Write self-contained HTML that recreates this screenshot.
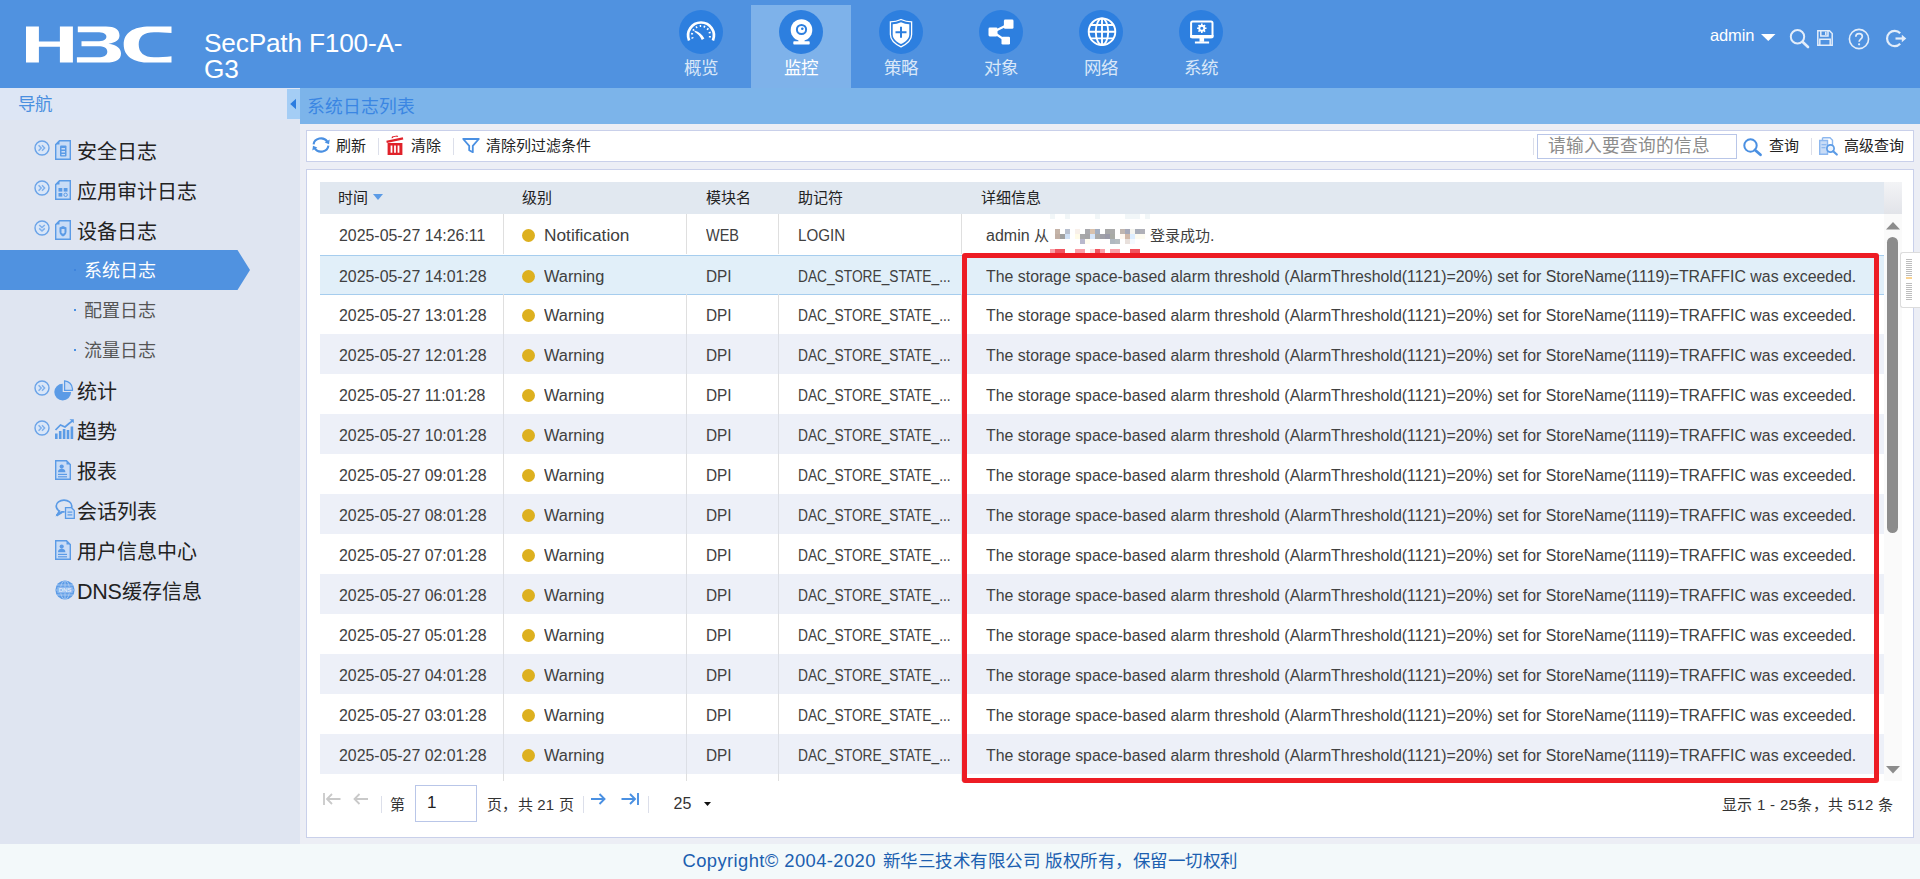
<!DOCTYPE html>
<html lang="zh-CN">
<head>
<meta charset="utf-8">
<title>H3C SecPath F100-A-G3</title>
<style>
*{box-sizing:border-box;margin:0;padding:0}
html,body{width:1920px;height:879px;overflow:hidden;background:#eceef5;font-family:"Liberation Sans",sans-serif;color:#333}
.abs{position:absolute}
svg{display:block;overflow:visible}
/* ---------- header ---------- */
#hdr{position:absolute;left:0;top:0;width:1920px;height:88px;background:#5092e0}
#logo{position:absolute;left:26px;top:25.700px}
#prod{position:absolute;left:204px;top:29.500px;width:210px;font-size:26.250px;line-height:26.500px;color:#fff;letter-spacing:-.2px}
.tab{position:absolute;top:5px;width:100px;height:83px}
.tab.on{background:#7eb2ea}
.tab .ic{position:absolute;left:27.500px;top:5px;width:44px;height:44px;border-radius:50%;background:#2d7fdf}
.tab .lb{position:absolute;left:0;top:51px;width:100px;text-align:center;font-size:17.5px;line-height:24px;color:#d9e7f8}
.tab.on .lb{color:#fff}
#user{position:absolute;left:1710px;top:24px;font-size:16.5px;line-height:22px;color:#fff;letter-spacing:-.15px}
/* ---------- sidebar ---------- */
#side{position:absolute;left:0;top:88px;width:300px;height:756px;background:#dfe5f1}
#navh{position:absolute;left:0;top:0;width:300px;height:32px;background:#dde6f5;color:#4a8fe0;font-size:17.5px;line-height:32px;padding-left:18px}
#coll{position:absolute;left:287px;top:1px;width:13px;height:30px;background:#a4cdf5}
.ni{position:absolute;left:0;width:300px;height:40px;font-size:20px;line-height:40px;color:#222}
.ni .tx{position:absolute;left:77px;top:1.500px;white-space:nowrap}
.ni .ex{position:absolute;left:33.500px;top:9.500px}
.ni .di{position:absolute;left:54.700px;top:10px}
.si{position:absolute;left:0;width:300px;height:40px;font-size:18px;line-height:40px;color:#555}
.si .tx{position:absolute;left:83.500px;top:.5px;white-space:nowrap}
.si .bu{position:absolute;left:74px;top:19px;width:2px;height:2px;background:#4a90e2}
.si.on{color:#fff}
.si.on .bg{position:absolute;left:0;top:0}
/* ---------- main ---------- */
#tbar{position:absolute;left:300px;top:88px;width:1620px;height:36px;background:#7cb4ea;color:#3a86e3;font-size:17.800px;line-height:38px;padding-left:7px}
#tool{position:absolute;left:306px;top:130px;width:1608px;height:32px;background:#fff;border:1px solid #c9d0ea}
#tool .t{position:absolute;top:0;font-size:15px;line-height:30px;color:#222;white-space:nowrap}
#tool .sp{position:absolute;top:7px;width:1px;height:17px;background:#dcdfea}
#panel{position:absolute;left:306px;top:169px;width:1608px;height:669px;background:#fff;border:1px solid #c9d0ea}
#foot{position:absolute;left:0;top:844px;width:1920px;height:35px;background:#f3f9fa;color:#1c5fb0;font-size:17.500px;line-height:35px;white-space:nowrap}
#fl{position:absolute;left:682.500px;top:-1px;font-size:18.400px;letter-spacing:.4px}
#fc{position:absolute;left:882.500px;top:0;letter-spacing:.5px}

/* ---------- grid ---------- */
#gh{position:absolute;left:13px;top:12px;width:1564px;height:32px;background:#e1e8f0}
#gh span{position:absolute;top:0;font-size:15px;line-height:31px;color:#222;white-space:nowrap}
#ghs{position:absolute;left:1577px;top:12px;width:18px;height:32px;background:linear-gradient(#f3f4f6,#e2e4e9)}
#gb{position:absolute;left:13px;top:44px;width:1564px;height:567px;overflow:hidden;background:#fff}
.r{position:absolute;left:0;width:1564px;height:40px;font-size:16px;line-height:40px;color:#404040;white-space:nowrap}
.r.a{background:#edf0f8}
.r.s{background:#e1eff9;box-shadow:0 -1px 0 #a6cdee inset,0 1px 0 #a6cdee inset}
.r.s{margin-top:1px;height:40px}
.r i{position:absolute;top:0;width:1px;height:40px;background:#dfdfdf}
.r.a i{background:#dcdfe6}
.r.s i{display:none}
.r b{position:absolute;top:15px;left:202px;width:13px;height:13px;border-radius:50%;background:#ddb01e}
.r span{position:absolute;top:1.500px;font-style:normal;display:inline-block;transform-origin:0 50%}
.r em{font-style:normal;font-size:15px}
.c1{transform:scaleX(.993)}.n{transform:scaleX(1.08)}.wa{transform:scaleX(1.022)}.w{transform:scaleX(.905)}.d{transform:scaleX(.96)}.l{transform:scaleX(.945)}.dac{transform:scaleX(.858)}.m{transform:scaleX(.9925)}
.c1{left:19px}.c2{left:224px}.c3{left:386px}.c4{left:478px}.c5{left:666px}
#sb{position:absolute;left:1577px;top:44px;width:18px;height:567px;background:#fafafa}
#sb .th{position:absolute;left:3px;top:23px;width:11px;height:296px;border-radius:5.500px;background:#8c8c8c}
/* ---------- pager ---------- */
#pg{position:absolute;left:0;top:611px;width:1606px;height:56px;font-size:15px;color:#333}
#pg .t{position:absolute;white-space:nowrap;line-height:20px}
#pg .sp{position:absolute;top:15px;width:1px;height:17px;background:#dcdfea}
#pg .in{position:absolute;left:108px;top:4px;width:62px;height:37px;border:1px solid #b9c6e8;background:#fff;font-size:17px;line-height:34px;padding-left:11px;color:#222}
#red{position:absolute;left:962px;top:253px;width:917px;height:530px;border:5px solid #ed1c24;border-radius:3px;z-index:9}
#wid{position:absolute;left:1900px;top:252px;width:20px;height:56px;background:#fff;border:1px solid #dcdcdc;border-right:0;border-radius:3px 0 0 3px;z-index:8}
</style>
</head>
<body>
<svg width="0" height="0" style="position:absolute">
  <defs>
    <symbol id="exR" viewBox="0 0 16 16">
      <circle cx="8" cy="8" r="7" fill="#d9e6f8" stroke="#6aa3e8" stroke-width="1.4"/>
      <path d="M4.600 5.200 7.200 8 4.600 10.800M8 5.200 10.600 8 8 10.800" fill="none" stroke="#7fb0ec" stroke-width="1.500"/>
    </symbol>
    <symbol id="exD" viewBox="0 0 16 16">
      <circle cx="8" cy="8" r="7" fill="#d9e6f8" stroke="#6aa3e8" stroke-width="1.4"/>
      <path d="M5.200 5 8 7.600 10.800 5M5.200 8.400 8 11 10.800 8.400" fill="none" stroke="#7fb0ec" stroke-width="1.500"/>
    </symbol>
    <symbol id="doc" viewBox="0 0 16 20">
      <path d="M4.500 .7H15.300V19.300H.7V4.500z" fill="#c9dcf6" stroke="#5b9be6" stroke-width="1.4"/>
      <path d="M.7 4.500H4.500V.7z" fill="#5b9be6"/>
    </symbol>
  </defs>
</svg>
<!-- ================= HEADER ================= -->
<div id="hdr">
  <svg id="logo" width="146" height="37" viewBox="0 0 146 36.200">
    <g fill="#fff">
      <path d="M0 0h12.900v15.100h21V0h13v36.200h-13V20.300h-21v15.900H0z"/>
      <path d="M51.800 0H80C89 0 93.500 3 93.500 9c0 4.500-3.500 7-11 8.300C91 18.500 95 22 95 27c0 6-5 9.200-15 9.200H50.900v-5.400H72c6 0 9.300-1.800 9.300-5.500 0-3.800-3.300-5.500-9.300-5.500H55.500v-4.900H71c6 0 9.400-1.400 9.400-4.600 0-3.300-3.400-4.500-9.400-4.500H51.800z"/>
      <path d="M145.500 0v6.700C140 6 134 5.800 128 5.800c-10 0-15.300 4.200-15.300 12.200S118 30.800 128 30.800c6 0 12-.3 17.500-1v6.400H124c-17 0-26.300-6.700-26.300-18.200S107 0 124 0z"/>
    </g>
  </svg>
  <div id="prod">SecPath F100-A-<br>G3</div>

  <div class="tab" style="left:651px"><div class="ic" id="i1"><svg width="44" height="44" viewBox="0 0 44 44"><path d="M10.100 30.400A12.900 12.900 0 1 1 33.900 30.400" fill="none" stroke="#fff" stroke-width="2.700"/><path d="M13.700 28.500A9 9 0 1 1 30.300 28.500" fill="none" stroke="#fff" stroke-width="2" stroke-dasharray="1.500 2.550"/><path d="M16 20.800c3.800.8 7.300 3.700 9.400 7.600l-2.600 1.500c-1.500-3.400-3.800-6.200-7.400-8.200z" fill="#fff"/></svg></div><div class="lb">概览</div></div>
  <div class="tab on" style="left:751px"><div class="ic" id="i2"><svg width="44" height="44" viewBox="0 0 44 44"><circle cx="22.500" cy="20" r="10.800" fill="#fff"/><circle cx="22.500" cy="19.500" r="4.600" fill="none" stroke="#2d7fdf" stroke-width="2"/><circle cx="23.300" cy="18.700" r="1.300" fill="#2d7fdf"/><path d="M19.500 29h6v3.500h-6z" fill="#fff"/><rect x="14.300" y="31.300" width="16.400" height="3.300" rx=".8" fill="#fff"/></svg></div><div class="lb">监控</div></div>
  <div class="tab" style="left:851px"><div class="ic" id="i3"><svg width="44" height="44" viewBox="0 0 44 44"><path d="M22 9.500c3.500 1.700 6.800 2.400 10.600 2.400v12.600c0 5.500-4.800 9.600-10.600 12.300-5.800-2.700-10.600-6.800-10.600-12.300V11.900c3.800 0 7.100-.7 10.600-2.400z" fill="none" stroke="#fff" stroke-width="1.300"/><path d="M22 12.200c2.800 1.300 5.400 1.900 8.300 2v10.200c0 4.200-3.700 7.500-8.300 9.700-4.600-2.200-8.300-5.500-8.300-9.700V14.200c2.900-.1 5.500-.7 8.300-2z" fill="#fff"/><path d="M22 16.800v11M16.500 22.300h11" stroke="#2d7fdf" stroke-width="2"/></svg></div><div class="lb">策略</div></div>
  <div class="tab" style="left:951px"><div class="ic" id="i4"><svg width="44" height="44" viewBox="0 0 44 44"><path d="M14 22 29.700 14.200M14 22 26.700 30.600" stroke="#fff" stroke-width="2.200"/><rect x="9.500" y="17.600" width="9" height="8.800" rx="1.300" fill="#fff"/><rect x="24.900" y="9.600" width="9.600" height="9.100" rx="1.300" fill="#fff"/><rect x="22.500" y="26.800" width="8.500" height="7.700" rx="1.300" fill="#fff"/></svg></div><div class="lb">对象</div></div>
  <div class="tab" style="left:1051px"><div class="ic" id="i5"><svg width="44" height="44" viewBox="0 0 44 44"><g fill="none" stroke="#fff" stroke-width="1.900"><circle cx="23" cy="21.700" r="13.300"/><ellipse cx="23" cy="21.700" rx="6.200" ry="13.300"/><path d="M23 8.400v26.600M9.700 21.700h26.600M11.700 15h22.600M11.700 28.400h22.600"/></g></svg></div><div class="lb">网络</div></div>
  <div class="tab" style="left:1151px"><div class="ic" id="i6"><svg width="44" height="44" viewBox="0 0 44 44"><rect x="12.100" y="11.600" width="21.400" height="15.600" rx="1.500" fill="none" stroke="#fff" stroke-width="2"/><path d="M11.100 25h23.400v1.700a1.500 1.500 0 0 1-1.500 1.500H12.600a1.500 1.500 0 0 1-1.500-1.500z" fill="#fff"/><path d="M20.500 28h4.600v3.800h-4.600z" fill="#fff"/><rect x="15.900" y="31.500" width="14.200" height="2" fill="#fff"/><circle cx="22.800" cy="18.300" r="2.500" fill="none" stroke="#fff" stroke-width="1.900"/><path d="M22.800 13.600v2M22.800 21v2M18.100 18.300h2M25.500 18.300h2M19.500 15l1.400 1.400M24.700 20.200l1.400 1.400M26.100 15l-1.400 1.400M20.900 20.200l-1.400 1.400" stroke="#fff" stroke-width="1.600"/></svg></div><div class="lb">系统</div></div>

  <div id="user">admin</div>

  <svg class="abs" style="left:1761px;top:34px" width="15" height="8" viewBox="0 0 15 8"><path d="M0 0h14.500L7.250 7z" fill="#fff"/></svg>
  <svg class="abs" style="left:1789px;top:28px" width="21" height="20" viewBox="0 0 21 20"><circle cx="8.500" cy="8.800" r="6.700" fill="none" stroke="#e3edfa" stroke-width="2"/><path d="M13.500 13.800 19 19" stroke="#e3edfa" stroke-width="2.600" stroke-linecap="round"/></svg>
  <svg class="abs" style="left:1817px;top:30px" width="16" height="16" viewBox="0 0 16 16"><path d="M.8 .8H12.500L15.200 3.500V15.200H.8z" fill="none" stroke="#e3edfa" stroke-width="1.500"/><path d="M3.800 .8V6H11V.8M8.800 1.800V5" fill="none" stroke="#e3edfa" stroke-width="1.500"/><path d="M2.800 15.200V9.200H13.200V15.200" fill="none" stroke="#e3edfa" stroke-width="1.500"/></svg>
  <svg class="abs" style="left:1848px;top:27.500px" width="22" height="22" viewBox="0 0 22 22"><circle cx="11" cy="11" r="9.600" fill="none" stroke="#e3edfa" stroke-width="1.600"/><path d="M7.800 8.800c0-2 1.400-3.200 3.300-3.200s3.200 1.200 3.200 2.900c0 2.600-3.200 2.600-3.200 5.300" fill="none" stroke="#e3edfa" stroke-width="1.700"/><circle cx="11.100" cy="16.300" r="1.100" fill="#e3edfa"/></svg>
  <svg class="abs" style="left:1885px;top:29px" width="22" height="19" viewBox="0 0 22 19"><path d="M15.200 4.300A7.600 7.600 0 1 0 15.200 14.700" fill="none" stroke="#e3edfa" stroke-width="2.200"/><path d="M10.500 9.500H18" stroke="#e3edfa" stroke-width="2.200"/><path d="M16.800 5.800 21.300 9.500 16.800 13.200z" fill="#e3edfa"/></svg>
</div>

<!-- ================= SIDEBAR ================= -->
<div id="side">
  <div id="navh">导航</div>
  <div id="coll"><svg width="13" height="30" viewBox="0 0 13 30"><path d="M9 9.800v10.400L3.200 15z" fill="#2b7ce0"/></svg></div>
  <div class="ni" style="top:42px"><svg class="ex" width="16" height="16" viewBox="0 0 16 16"><use href="#exR"/></svg><svg class="di" width="16" height="20" viewBox="0 0 16 20"><use href="#doc"/><rect x="5" y="5.500" width="6.500" height="11" rx="1" fill="#5b9be6"/><rect x="6.500" y="8" width="3.500" height="1.500" fill="#c9dcf6"/><rect x="6.500" y="11" width="3.500" height="1.500" fill="#c9dcf6"/><rect x="6.500" y="14" width="3.500" height="1.200" fill="#c9dcf6"/></svg><span class="tx">安全日志</span></div>
  <div class="ni" style="top:82px"><svg class="ex" width="16" height="16" viewBox="0 0 16 16"><use href="#exR"/></svg><svg class="di" width="16" height="20" viewBox="0 0 16 20"><use href="#doc"/><rect x="3.500" y="8" width="3.800" height="3.600" fill="#5b9be6"/><rect x="8.700" y="8" width="3.800" height="3.600" fill="#5b9be6"/><rect x="3.500" y="13" width="3.800" height="3.600" fill="#5b9be6"/><circle cx="10.600" cy="14.800" r="1.700" fill="none" stroke="#5b9be6" stroke-width="1"/></svg><span class="tx">应用审计日志</span></div>
  <div class="ni" style="top:122px"><svg class="ex" width="16" height="16" viewBox="0 0 16 16"><use href="#exD"/></svg><svg class="di" width="16" height="20" viewBox="0 0 16 20"><use href="#doc"/><path d="M4.500 7.500 8 6l3.500 1.500v4c0 2.500-1.500 4-3.500 5-2-1-3.500-2.500-3.500-5z" fill="#5b9be6"/><path d="M6.500 9h3v3.500L8 14l-1.500-1.500z" fill="#c9dcf6"/></svg><span class="tx">设备日志</span></div>
  <div class="si on" style="top:162px"><svg class="bg" width="250" height="40" viewBox="0 0 250 40"><path d="M0 0H237.500L250 20 237.500 40H0z" fill="#5092e0"/></svg><span class="bu" style="background:#3f84dc"></span><span class="tx">系统日志</span></div>
  <div class="si" style="top:202px"><span class="bu"></span><span class="tx">配置日志</span></div>
  <div class="si" style="top:242px"><span class="bu"></span><span class="tx">流量日志</span></div>
  <div class="ni" style="top:282px"><svg class="ex" width="16" height="16" viewBox="0 0 16 16"><use href="#exR"/></svg><svg class="di" style="top:9.500px;left:53.500px" width="19.500" height="21" viewBox="0 0 18 20"><path d="M8 3.500A8 8 0 1 0 16 11.500H8z" fill="#5b9be6"/><path d="M9.800 .8A8 8 0 0 1 17.300 8.300 9.800 9.800 0 0 1 17.300 9.800H9.800z" fill="#c9dcf6" stroke="#5b9be6" stroke-width="1.200"/></svg><span class="tx">统计</span></div>
  <div class="ni" style="top:322px"><svg class="ex" width="16" height="16" viewBox="0 0 16 16"><use href="#exR"/></svg><svg class="di" style="top:9px" width="19" height="20" viewBox="0 0 19 20"><g fill="#5b9be6"><rect x="0" y="14.500" width="2.600" height="5.500"/><rect x="3.900" y="12" width="2.600" height="8"/><rect x="7.800" y="10" width="2.600" height="10"/><rect x="11.700" y="11" width="2.600" height="9"/><rect x="15.600" y="7.500" width="2.600" height="12.500"/></g><path d="M.5 11 5.500 6 10 8l4-3.500 3.500-2.700" fill="none" stroke="#5b9be6" stroke-width="1.700"/><path d="M14.500 .3 18.800 .3 18.800 4.300z" fill="#5b9be6"/></svg><span class="tx">趋势</span></div>
  <div class="ni" style="top:362px"><svg class="di" width="16" height="20" viewBox="0 0 16 20"><path d="M.7 .7H11.500L15.300 4.500V19.300H.7z" fill="#c9dcf6" stroke="#5b9be6" stroke-width="1.4"/><path d="M11.500 .7V4.500H15.300z" fill="#5b9be6"/><circle cx="6.700" cy="6.600" r="2.100" fill="#5b9be6"/><path d="M3 12.200c0-2.400 1.600-3.400 3.700-3.400s3.700 1 3.700 3.400z" fill="#5b9be6"/><rect x="3" y="13.800" width="9" height="1.200" fill="#5b9be6"/><rect x="3" y="16.200" width="9" height="1.200" fill="#5b9be6"/></svg><span class="tx">报表</span></div>
  <div class="ni" style="top:402px"><svg class="di" style="top:9px" width="20" height="20" viewBox="0 0 20 20"><path d="M9 1.200c4.300 0 7.800 2.600 7.800 5.900 0 .7-.1 1.200-.4 1.800" fill="none" stroke="#5b9be6" stroke-width="1.700"/><path d="M9 1.200C4.700 1.200 1.200 3.800 1.200 7.100c0 2 1.200 3.700 3.100 4.800L2.500 15.500l4.800-2.700 2.300.1" fill="none" stroke="#5b9be6" stroke-width="1.700"/><path d="M1.500 16.500 7 13" stroke="#5b9be6" stroke-width="2.200"/><path d="M10.500 8.700H16.500L19.300 11.500V19.300H10.500z" fill="#c9dcf6" stroke="#5b9be6" stroke-width="1.300"/><rect x="12.500" y="12.500" width="4.800" height="1.200" fill="#5b9be6"/><rect x="12.500" y="15.300" width="4.800" height="1.200" fill="#5b9be6"/></svg><span class="tx">会话列表</span></div>
  <div class="ni" style="top:442px"><svg class="di" width="16" height="20" viewBox="0 0 16 20"><path d="M.7 .7H11.500L15.300 4.500V19.300H.7z" fill="#c9dcf6" stroke="#5b9be6" stroke-width="1.4"/><path d="M11.500 .7V4.500H15.300z" fill="#5b9be6"/><circle cx="6.700" cy="6.600" r="2.100" fill="#5b9be6"/><path d="M3 12.200c0-2.400 1.600-3.400 3.700-3.400s3.700 1 3.700 3.400z" fill="#5b9be6"/><rect x="3" y="13.800" width="9" height="1.200" fill="#5b9be6"/><rect x="3" y="16.200" width="9" height="1.200" fill="#5b9be6"/></svg><span class="tx">用户信息中心</span></div>
  <div class="ni" style="top:482px"><svg class="di" style="top:10px" width="20" height="20" viewBox="0 0 20 20"><circle cx="10" cy="10" r="9.600" fill="#5b9be6"/><g fill="none" stroke="#a9c9f2" stroke-width="1"><ellipse cx="10" cy="10" rx="4.500" ry="9.500"/><path d="M10 .5V19.500M.5 10H19.500M2 5H18M2 15H18"/></g><rect x="2.200" y="6.800" width="15.600" height="6.400" rx="1.200" fill="#8db8ef"/><text x="10" y="12.300" font-size="6.200" font-family="Liberation Sans, sans-serif" font-weight="bold" text-anchor="middle" fill="#dfeaf9" letter-spacing="-.2">DNS</text></svg><span class="tx"><span style="font-size:21.500px;letter-spacing:-.3px">DNS</span>缓存信息</span></div>
</div>

<!-- ================= MAIN ================= -->
<div id="tbar">系统日志列表</div>
<div id="tool">
  <svg class="abs" style="left:5px;top:6px" width="18" height="16" viewBox="0 0 18 16"><g fill="none" stroke="#4a90e2" stroke-width="2.100"><path d="M1.600 7.400A7.400 6.600 0 0 1 15.300 4.600"/><path d="M16.400 8.600A7.400 6.600 0 0 1 2.700 11.400"/></g><path d="M17.700 2.600 17 7.200 12.700 5.600z" fill="#4a90e2"/><path d="M.3 13.400 1 8.800 5.300 10.400z" fill="#4a90e2"/></svg>
  <span class="t" style="left:28.500px">刷新</span>
  <span class="sp" style="left:71px"></span>
  <svg class="abs" style="left:79px;top:5px" width="18" height="19" viewBox="0 0 18 19"><g fill="#e0222a"><path d="M.3 4.800 16.800 1.200 17.300 3.400.8 7z"/><path d="M5.500 2.200 6 .5 11.200 -.6 12.300 .8 10.800 1.100 10.300 .5 7.200 1.200 7 1.900z"/><path d="M1.600 7h14.800v12H1.600zM4.600 9.500v7.300h1.800V9.500zM8.100 9.500v7.300h1.800V9.500zM11.600 9.500v7.300h1.800V9.500z" fill-rule="evenodd"/></g></svg>
  <span class="t" style="left:103.500px">清除</span>
  <span class="sp" style="left:146px"></span>
  <svg class="abs" style="left:155px;top:6.500px" width="18" height="16" viewBox="0 0 18 16"><path d="M1.200 1h15.600l-6 6.800v6.400l-3.600-2V7.800z" fill="none" stroke="#4a90e2" stroke-width="1.800" stroke-linejoin="round"/></svg>
  <span class="t" style="left:178.500px">清除列过滤条件</span>
  <span class="sp" style="left:1226px"></span>
  <div class="abs" style="left:1230px;top:3px;width:200px;height:25px;border:1px solid #b9c6e8;background:#fff;font-size:17.700px;line-height:22px;color:#8c8c8c;padding-left:10px;white-space:nowrap;overflow:hidden">请输入要查询的信息</div>
  <svg class="abs" style="left:1436px;top:6.500px" width="19" height="18" viewBox="0 0 19 18"><circle cx="7.500" cy="7.500" r="6.200" fill="none" stroke="#4a90e2" stroke-width="2"/><path d="M12 12 17.500 16.800" stroke="#4a90e2" stroke-width="2.800" stroke-linecap="round"/></svg>
  <span class="t" style="left:1461.500px">查询</span>
  <span class="sp" style="left:1504px"></span>
  <svg class="abs" style="left:1511.500px;top:6px" width="19" height="18" viewBox="0 0 19 18"><path d="M3.500 .7H11l2.500 2.500V8" fill="none" stroke="#8db8ef" stroke-width="1.400"/><path d="M.7 3.500H8.500V17.300H.7z" fill="#c9dcf6" stroke="#8db8ef" stroke-width="1.400"/><path d="M3.500 .7V3.500" stroke="#8db8ef" stroke-width="1.400"/><rect x="2.500" y="7" width="5" height="1.300" fill="#8db8ef"/><rect x="2.500" y="10" width="4" height="1.300" fill="#8db8ef"/><circle cx="11.500" cy="11.500" r="3.600" fill="#eaf2fc" stroke="#5b9be6" stroke-width="1.700"/><path d="M14.200 14.200 17.800 17.500" stroke="#5b9be6" stroke-width="2.200" stroke-linecap="round"/></svg>
  <span class="t" style="left:1536.500px">高级查询</span>
</div>
<div id="panel">
  <div id="gh"><span style="left:18px">时间</span><svg class="abs" style="left:52.500px;top:12px" width="10" height="6" viewBox="0 0 10 6"><path d="M0 0h10L5 6z" fill="#5b9be6"/></svg><span style="left:202px">级别</span><span style="left:385.500px">模块名</span><span style="left:477.500px">助记符</span><span style="left:661px">详细信息</span></div>
  <div id="ghs"></div>
  <div id="gb">
    <div class="r" style="top:0px"><i style="left:183px"></i><i style="left:366px"></i><i style="left:458px"></i><i style="left:641px"></i><span class="c1">2025-05-27 14:26:11</span><b></b><span class="c2 n">Notification</span><span class="c3 w">WEB</span><span class="c4 l">LOGIN</span><span class="c5 ad">admin <em>从</em></span><span class="c5 ok" style="left:830px"><em>登录成功</em>.</span></div>
    <div class="r s" style="top:40px"><i style="left:183px"></i><i style="left:366px"></i><i style="left:458px"></i><i style="left:641px"></i><span class="c1">2025-05-27 14:01:28</span><b></b><span class="c2 wa">Warning</span><span class="c3 d">DPI</span><span class="c4 dac">DAC_STORE_STATE_...</span><span class="c5 m">The storage space-based alarm threshold (AlarmThreshold(1121)=20%) set for StoreName(1119)=TRAFFIC was exceeded.</span></div>
    <div class="r" style="top:80px"><i style="left:183px"></i><i style="left:366px"></i><i style="left:458px"></i><i style="left:641px"></i><span class="c1">2025-05-27 13:01:28</span><b></b><span class="c2 wa">Warning</span><span class="c3 d">DPI</span><span class="c4 dac">DAC_STORE_STATE_...</span><span class="c5 m">The storage space-based alarm threshold (AlarmThreshold(1121)=20%) set for StoreName(1119)=TRAFFIC was exceeded.</span></div>
    <div class="r a" style="top:120px"><i style="left:183px"></i><i style="left:366px"></i><i style="left:458px"></i><i style="left:641px"></i><span class="c1">2025-05-27 12:01:28</span><b></b><span class="c2 wa">Warning</span><span class="c3 d">DPI</span><span class="c4 dac">DAC_STORE_STATE_...</span><span class="c5 m">The storage space-based alarm threshold (AlarmThreshold(1121)=20%) set for StoreName(1119)=TRAFFIC was exceeded.</span></div>
    <div class="r" style="top:160px"><i style="left:183px"></i><i style="left:366px"></i><i style="left:458px"></i><i style="left:641px"></i><span class="c1">2025-05-27 11:01:28</span><b></b><span class="c2 wa">Warning</span><span class="c3 d">DPI</span><span class="c4 dac">DAC_STORE_STATE_...</span><span class="c5 m">The storage space-based alarm threshold (AlarmThreshold(1121)=20%) set for StoreName(1119)=TRAFFIC was exceeded.</span></div>
    <div class="r a" style="top:200px"><i style="left:183px"></i><i style="left:366px"></i><i style="left:458px"></i><i style="left:641px"></i><span class="c1">2025-05-27 10:01:28</span><b></b><span class="c2 wa">Warning</span><span class="c3 d">DPI</span><span class="c4 dac">DAC_STORE_STATE_...</span><span class="c5 m">The storage space-based alarm threshold (AlarmThreshold(1121)=20%) set for StoreName(1119)=TRAFFIC was exceeded.</span></div>
    <div class="r" style="top:240px"><i style="left:183px"></i><i style="left:366px"></i><i style="left:458px"></i><i style="left:641px"></i><span class="c1">2025-05-27 09:01:28</span><b></b><span class="c2 wa">Warning</span><span class="c3 d">DPI</span><span class="c4 dac">DAC_STORE_STATE_...</span><span class="c5 m">The storage space-based alarm threshold (AlarmThreshold(1121)=20%) set for StoreName(1119)=TRAFFIC was exceeded.</span></div>
    <div class="r a" style="top:280px"><i style="left:183px"></i><i style="left:366px"></i><i style="left:458px"></i><i style="left:641px"></i><span class="c1">2025-05-27 08:01:28</span><b></b><span class="c2 wa">Warning</span><span class="c3 d">DPI</span><span class="c4 dac">DAC_STORE_STATE_...</span><span class="c5 m">The storage space-based alarm threshold (AlarmThreshold(1121)=20%) set for StoreName(1119)=TRAFFIC was exceeded.</span></div>
    <div class="r" style="top:320px"><i style="left:183px"></i><i style="left:366px"></i><i style="left:458px"></i><i style="left:641px"></i><span class="c1">2025-05-27 07:01:28</span><b></b><span class="c2 wa">Warning</span><span class="c3 d">DPI</span><span class="c4 dac">DAC_STORE_STATE_...</span><span class="c5 m">The storage space-based alarm threshold (AlarmThreshold(1121)=20%) set for StoreName(1119)=TRAFFIC was exceeded.</span></div>
    <div class="r a" style="top:360px"><i style="left:183px"></i><i style="left:366px"></i><i style="left:458px"></i><i style="left:641px"></i><span class="c1">2025-05-27 06:01:28</span><b></b><span class="c2 wa">Warning</span><span class="c3 d">DPI</span><span class="c4 dac">DAC_STORE_STATE_...</span><span class="c5 m">The storage space-based alarm threshold (AlarmThreshold(1121)=20%) set for StoreName(1119)=TRAFFIC was exceeded.</span></div>
    <div class="r" style="top:400px"><i style="left:183px"></i><i style="left:366px"></i><i style="left:458px"></i><i style="left:641px"></i><span class="c1">2025-05-27 05:01:28</span><b></b><span class="c2 wa">Warning</span><span class="c3 d">DPI</span><span class="c4 dac">DAC_STORE_STATE_...</span><span class="c5 m">The storage space-based alarm threshold (AlarmThreshold(1121)=20%) set for StoreName(1119)=TRAFFIC was exceeded.</span></div>
    <div class="r a" style="top:440px"><i style="left:183px"></i><i style="left:366px"></i><i style="left:458px"></i><i style="left:641px"></i><span class="c1">2025-05-27 04:01:28</span><b></b><span class="c2 wa">Warning</span><span class="c3 d">DPI</span><span class="c4 dac">DAC_STORE_STATE_...</span><span class="c5 m">The storage space-based alarm threshold (AlarmThreshold(1121)=20%) set for StoreName(1119)=TRAFFIC was exceeded.</span></div>
    <div class="r" style="top:480px"><i style="left:183px"></i><i style="left:366px"></i><i style="left:458px"></i><i style="left:641px"></i><span class="c1">2025-05-27 03:01:28</span><b></b><span class="c2 wa">Warning</span><span class="c3 d">DPI</span><span class="c4 dac">DAC_STORE_STATE_...</span><span class="c5 m">The storage space-based alarm threshold (AlarmThreshold(1121)=20%) set for StoreName(1119)=TRAFFIC was exceeded.</span></div>
    <div class="r a" style="top:520px"><i style="left:183px"></i><i style="left:366px"></i><i style="left:458px"></i><i style="left:641px"></i><span class="c1">2025-05-27 02:01:28</span><b></b><span class="c2 wa">Warning</span><span class="c3 d">DPI</span><span class="c4 dac">DAC_STORE_STATE_...</span><span class="c5 m">The storage space-based alarm threshold (AlarmThreshold(1121)=20%) set for StoreName(1119)=TRAFFIC was exceeded.</span></div>
    <div class="r" style="top:560px"><i style="left:183px"></i><i style="left:366px"></i><i style="left:458px"></i><i style="left:641px"></i><span class="c1">2025-05-27 01:01:28</span><b></b><span class="c2 wa">Warning</span><span class="c3 d">DPI</span><span class="c4 dac">DAC_STORE_STATE_...</span><span class="c5 m">The storage space-based alarm threshold (AlarmThreshold(1121)=20%) set for StoreName(1119)=TRAFFIC was exceeded.</span></div>
    <svg class="abs" style="left:0;top:0" width="1564" height="40" viewBox="0 0 1564 40"><rect x="735" y="15" width="5" height="5" fill="#c5b4a8"/><rect x="745" y="15" width="5" height="5" fill="#b8c0cf"/><rect x="755" y="15" width="5" height="5" fill="#f8f0ea"/><rect x="765" y="15" width="5" height="5" fill="#a9a9ad"/><rect x="770" y="15" width="5" height="5" fill="#d9c2ae"/><rect x="775" y="15" width="5" height="5" fill="#a3aec0"/><rect x="785" y="15" width="5" height="5" fill="#a8a8a8"/><rect x="790" y="15" width="5" height="5" fill="#aaaaaa"/><rect x="800" y="15" width="5" height="5" fill="#c0b6b0"/><rect x="805" y="15" width="5" height="5" fill="#a5a8b8"/><rect x="810" y="15" width="5" height="5" fill="#f5f5f0"/><rect x="815" y="15" width="5" height="5" fill="#a8adb8"/><rect x="820" y="15" width="5" height="5" fill="#b0b0b8"/><rect x="735" y="20" width="5" height="5" fill="#c0aea3"/><rect x="740" y="20" width="5" height="5" fill="#a0a0a0"/><rect x="745" y="20" width="5" height="5" fill="#cfe0f5"/><rect x="755" y="20" width="5" height="5" fill="#fffbe8"/><rect x="760" y="20" width="5" height="5" fill="#a8a8aa"/><rect x="765" y="20" width="5" height="5" fill="#a5a5a8"/><rect x="770" y="20" width="5" height="5" fill="#d6e6fa"/><rect x="775" y="20" width="5" height="5" fill="#aaaaaa"/><rect x="780" y="20" width="5" height="5" fill="#a0a0a8"/><rect x="785" y="20" width="5" height="5" fill="#9a9aa8"/><rect x="790" y="20" width="5" height="5" fill="#a8aaa5"/><rect x="800" y="20" width="5" height="5" fill="#fff8f0"/><rect x="805" y="20" width="5" height="5" fill="#d0b8a8"/><rect x="810" y="20" width="5" height="5" fill="#ddeeff"/><rect x="815" y="20" width="5" height="5" fill="#fdfbf0"/><rect x="820" y="20" width="5" height="5" fill="#fdfbf0"/><rect x="760" y="25" width="5" height="5" fill="#b8b8cc"/><rect x="765" y="25" width="5" height="5" fill="#fffdf0"/><rect x="790" y="25" width="5" height="5" fill="#b0b8c0"/><rect x="795" y="25" width="5" height="5" fill="#b5bcc0"/><rect x="805" y="25" width="5" height="5" fill="#e8e0dc"/><rect x="810" y="25" width="5" height="5" fill="#f5faff"/><rect x="730" y="0" width="5" height="5" fill="#f1f6f8"/><rect x="745" y="0" width="5" height="5" fill="#f1f6f8"/><rect x="775" y="0" width="5" height="5" fill="#f1f6f8"/><rect x="805" y="0" width="5" height="5" fill="#f1f6f8"/><rect x="810" y="0" width="5" height="5" fill="#f1f6f8"/><rect x="815" y="0" width="5" height="5" fill="#f1f6f8"/><rect x="825" y="0" width="5" height="5" fill="#f1f6f8"/><rect x="730" y="35" width="5" height="4" fill="#f8a0a8"/><rect x="735" y="35" width="5" height="4" fill="#f05560"/><rect x="740" y="35" width="5" height="4" fill="#f05560"/><rect x="755" y="35" width="5" height="4" fill="#f8a0a8"/><rect x="760" y="35" width="5" height="4" fill="#f8a0a8"/><rect x="770" y="35" width="5" height="4" fill="#fce0e0"/><rect x="775" y="35" width="5" height="4" fill="#f05560"/><rect x="780" y="35" width="5" height="4" fill="#f8a0a8"/><rect x="790" y="35" width="5" height="4" fill="#f8a0a8"/><rect x="795" y="35" width="5" height="4" fill="#f8a0a8"/><rect x="810" y="35" width="5" height="4" fill="#f05560"/><rect x="815" y="35" width="5" height="4" fill="#f05560"/></svg>
  </div>
  <div id="sb"><svg class="abs" style="left:2px;top:8px" width="14" height="8" viewBox="0 0 14 8"><path d="M0 7.500 7 0l7 7.500z" fill="#8c8c8c"/></svg><div class="th"></div><svg class="abs" style="left:2px;top:552px" width="14" height="8" viewBox="0 0 14 8"><path d="M0 0h14L7 7.500z" fill="#8c8c8c"/></svg></div>
  <div id="pg">
    <svg class="abs" style="left:15.500px;top:11.500px" width="18" height="12" viewBox="0 0 18 12"><path d="M1 0v12M17.500 6H4M9 1 4 6l5 5" fill="none" stroke="#c9c9c9" stroke-width="1.800"/></svg>
    <svg class="abs" style="left:46px;top:11.500px" width="15" height="12" viewBox="0 0 15 12"><path d="M15 6H1.500M6.500 1 1.500 6l5 5" fill="none" stroke="#c9c9c9" stroke-width="1.800"/></svg>
    <span class="sp" style="left:74px"></span>
    <span class="t" style="left:82.500px;top:14px">第</span>
    <div class="in">1</div>
    <span class="t" style="left:180px;top:14px;letter-spacing:.25px">页，共 21 页</span>
    <span class="sp" style="left:276px"></span>
    <svg class="abs" style="left:284px;top:11.500px" width="15" height="12" viewBox="0 0 15 12"><path d="M0 6h13.500M8.500 1l5 5-5 5" fill="none" stroke="#4a90e2" stroke-width="1.900"/></svg>
    <svg class="abs" style="left:314px;top:11.500px" width="18" height="12" viewBox="0 0 18 12"><path d="M17 0v12M.5 6H14M9 1l5 5-5 5" fill="none" stroke="#4a90e2" stroke-width="1.900"/></svg>
    <span class="sp" style="left:341px"></span>
    <span class="t" style="left:366.500px;top:13px;font-size:16px">25</span>
    <svg class="abs" style="left:396.500px;top:21px" width="7" height="4" viewBox="0 0 7 4"><path d="M0 0h7L3.500 4z" fill="#111"/></svg>
    <span class="t" style="right:19.500px;top:13.500px;letter-spacing:.32px">显示 1 - 25条，共 512 条</span>
  </div>
</div>
<div id="red"></div>
<div id="wid"><svg class="abs" style="left:5px;top:6px" width="6" height="42" viewBox="0 0 6 42"><path d="M0 .5h6M0 2.500h6M0 4.500h6M0 6.500h6M0 8.500h6M0 10.500h6M0 12.500h6M0 14.500h6M0 16.500h6M0 24.500h6M0 26.500h6M0 28.500h6M0 30.500h6M0 32.500h6M0 34.500h6M0 36.500h6M0 38.500h6M0 40.500h6" stroke="#bdbdbd" stroke-width="1"/><path d="M0 19h6" stroke="#f5a623" stroke-width="1"/></svg></div>
<div id="foot"><span id="fl">Copyright© 2004-2020 </span><span id="fc">新华三技术有限公司 版权所有，保留一切权利</span></div>
</body>
</html>
